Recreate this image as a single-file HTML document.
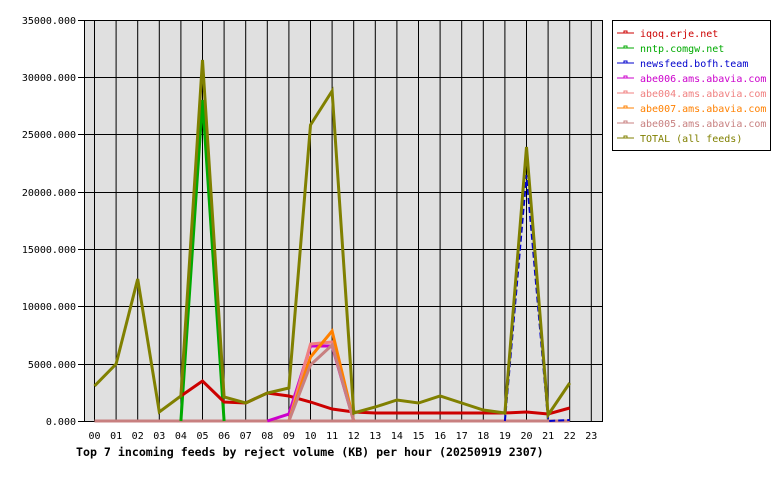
<!DOCTYPE html>
<html><head><style>
body{margin:0;background:#fff;width:780px;height:480px;overflow:hidden}
svg text{font-family:"DejaVu Sans Mono","Liberation Mono",monospace;font-size:10px}
</style></head><body>
<svg width="780" height="480" xmlns="http://www.w3.org/2000/svg">
<rect x="84" y="20" width="519" height="401" fill="#e0e0e0"/>
<g stroke="#000" stroke-width="1">
<path d="M94.5 20V421M116.1 20V421M137.7 20V421M159.3 20V421M180.9 20V421M202.5 20V421M224.1 20V421M245.7 20V421M267.3 20V421M288.9 20V421M310.5 20V421M332.1 20V421M353.7 20V421M375.3 20V421M396.9 20V421M418.5 20V421M440.1 20V421M461.7 20V421M483.3 20V421M504.9 20V421M526.5 20V421M548.1 20V421M569.7 20V421M591.3 20V421"/>
<path d="M78 20.5H603M78 77.5H603M78 134.5H603M78 192.5H603M78 249.5H603M78 306.5H603M78 364.5H603M78 421.5H603"/>
<path d="M84.5 20V421M602.5 20V421"/>
</g>
<g text-anchor="end" fill="#000">
<text x="76" y="24">35000.000</text><text x="76" y="81">30000.000</text><text x="76" y="138">25000.000</text><text x="76" y="196">20000.000</text><text x="76" y="253">15000.000</text><text x="76" y="310">10000.000</text><text x="76" y="368">5000.000</text><text x="76" y="425">0.000</text>
</g>
<g text-anchor="middle" fill="#000">
<text x="94.5" y="439">00</text><text x="116.1" y="439">01</text><text x="137.7" y="439">02</text><text x="159.3" y="439">03</text><text x="180.9" y="439">04</text><text x="202.5" y="439">05</text><text x="224.1" y="439">06</text><text x="245.7" y="439">07</text><text x="267.3" y="439">08</text><text x="288.9" y="439">09</text><text x="310.5" y="439">10</text><text x="332.1" y="439">11</text><text x="353.7" y="439">12</text><text x="375.3" y="439">13</text><text x="396.9" y="439">14</text><text x="418.5" y="439">15</text><text x="440.1" y="439">16</text><text x="461.7" y="439">17</text><text x="483.3" y="439">18</text><text x="504.9" y="439">19</text><text x="526.5" y="439">20</text><text x="548.1" y="439">21</text><text x="569.7" y="439">22</text><text x="591.3" y="439">23</text>
</g>
<text x="76" y="456" font-weight="bold" style="font-size:11.6px">Top 7 incoming feeds by reject volume (KB) per hour (20250919 2307)</text>
<g fill="none" stroke-width="3" stroke-linejoin="miter">
<polyline stroke="#c88080" points="94.5,421 569.7,421"/>
<polyline stroke="#0000cc" stroke-width="2" stroke-dasharray="6,3" points="504.9,421 526.5,175 548.1,421 569.7,420"/>
<polyline stroke="#00aa00" points="180.9,421 202.5,100 224.1,421"/>
<polyline stroke="#cc0000" points="180.9,396 202.5,381 224.1,402 245.7,403 267.3,393 288.9,396 310.5,402 332.1,409 353.7,412 375.3,413 504.9,413 526.5,412 548.1,414 569.7,408"/>
<polyline stroke="#cc00cc" points="267.3,421 288.9,414 310.5,346 332.1,346 353.7,421"/>
<polyline stroke="#f08080" points="288.9,421 310.5,344 332.1,342 353.7,421"/>
<polyline stroke="#ff8000" points="288.9,421 310.5,357 332.1,331 353.7,421"/>
<polyline stroke="#c88080" points="288.9,421 310.5,365 332.1,345 353.7,421"/>
<polyline stroke="#808000" points="94.5,386 116.1,364 137.7,279 159.3,412 180.9,396 202.5,60 224.1,397 245.7,403 267.3,393 288.9,388 310.5,125 332.1,91 353.7,413 375.3,407 396.9,400 418.5,403 440.1,396 461.7,403 483.3,410 504.9,413 526.5,147 548.1,415 569.7,383"/>
</g>
<rect x="612.5" y="20.5" width="158" height="130" fill="#fff" stroke="#000"/>
<g stroke-width="1">
<g stroke="#cc0000"><path d="M617 33H634"/><rect x="624" y="31" width="3" height="2" fill="none"/></g>
<g stroke="#00aa00"><path d="M617 48H634"/><rect x="624" y="46" width="3" height="2" fill="none"/></g>
<g stroke="#0000cc"><path d="M617 63H634"/><rect x="624" y="61" width="3" height="2" fill="none"/></g>
<g stroke="#cc00cc"><path d="M617 78H634"/><rect x="624" y="76" width="3" height="2" fill="none"/></g>
<g stroke="#f08080"><path d="M617 93H634"/><rect x="624" y="91" width="3" height="2" fill="none"/></g>
<g stroke="#ff8000"><path d="M617 108H634"/><rect x="624" y="106" width="3" height="2" fill="none"/></g>
<g stroke="#c88080"><path d="M617 123H634"/><rect x="624" y="121" width="3" height="2" fill="none"/></g>
<g stroke="#808000"><path d="M617 138H634"/><rect x="624" y="136" width="3" height="2" fill="none"/></g>
</g>
<text x="640" y="37" fill="#cc0000">iqoq.erje.net</text>
<text x="640" y="52" fill="#00aa00">nntp.comgw.net</text>
<text x="640" y="67" fill="#0000cc">newsfeed.bofh.team</text>
<text x="640" y="82" fill="#cc00cc">abe006.ams.abavia.com</text>
<text x="640" y="97" fill="#f08080">abe004.ams.abavia.com</text>
<text x="640" y="112" fill="#ff8000">abe007.ams.abavia.com</text>
<text x="640" y="127" fill="#c88080">abe005.ams.abavia.com</text>
<text x="640" y="142" fill="#808000">TOTAL (all feeds)</text>
</svg>
</body></html>
